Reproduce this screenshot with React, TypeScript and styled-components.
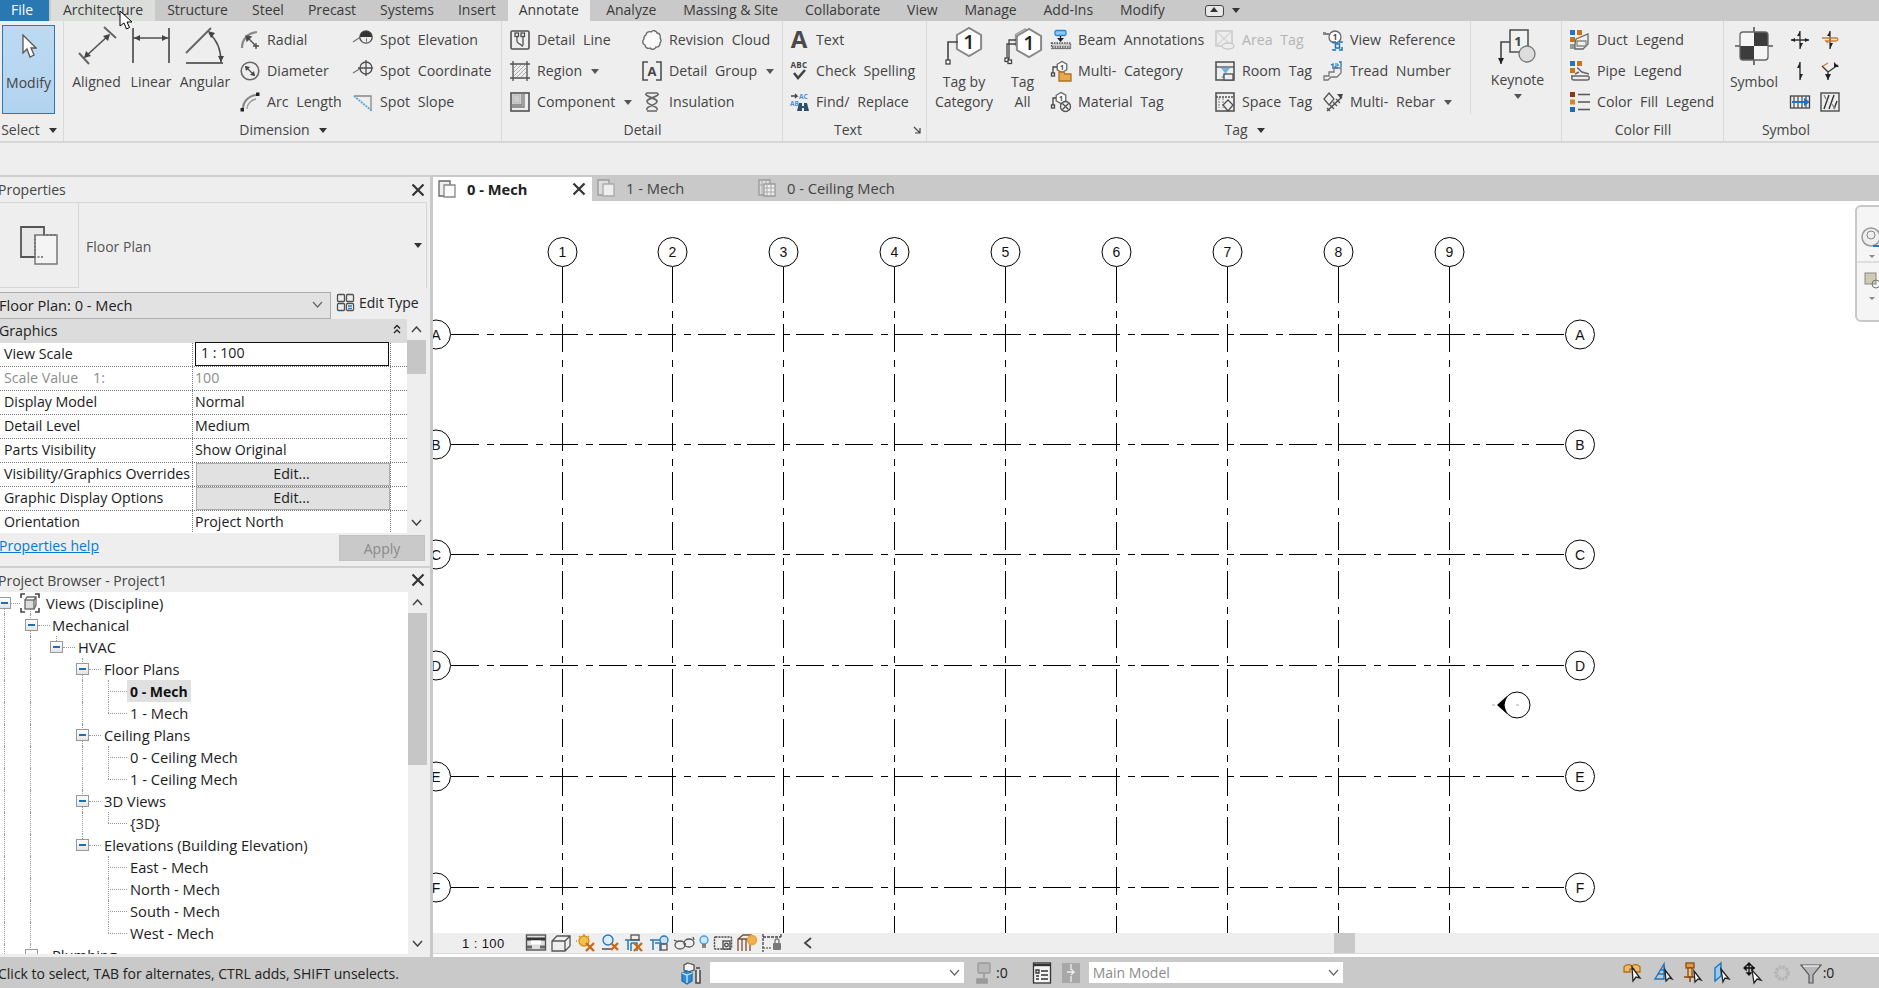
import React from 'react';
import styled, { createGlobalStyle } from 'styled-components';

const Global = createGlobalStyle`
  html, body { margin: 0; padding: 0; background: #eee; overflow: hidden; }
  #root { width: 1879px; height: 988px; }
`;

const FONT = `"Open Sans", "Noto Sans", "Liberation Sans", sans-serif`;
const INK = '#3f3f3f';

const Page = styled.div`
  position: relative; width: 1879px; height: 988px; overflow: hidden;
  display: flex; flex-direction: column;
  background: #eee; font-family: ${FONT}; font-size: 14px; color: ${INK};
`;

/* ---------- icon helpers ---------- */
const Glyph = styled.svg`
  display: block; flex-shrink: 0; fill: none; stroke: #505050; stroke-width: 1.3; overflow: visible;
  text { font-family: ${FONT}; stroke: none; fill: #444; }
`;
const ic = (w: number, h: number, children: React.ReactNode) => (
  <Glyph width={w} height={h} viewBox={`0 0 ${w} ${h}`}>{children}</Glyph>
);
const hex = (cx: number, cy: number, r: number) => {
  const p = [];
  for (let i = 0; i < 6; i++) {
    const a = Math.PI / 3 * i + Math.PI / 6;
    p.push(`${(cx + r * Math.cos(a)).toFixed(1)},${(cy + r * Math.sin(a)).toFixed(1)}`);
  }
  return p.join(' ');
};

const I = {
  aligned: ic(38, 38, <>
    <path d="M26 0 38 11M1 26l10 11" strokeWidth="2" stroke="#666" />
    <path d="M31 8 7 30" strokeWidth="1.6" />
    <path d="M32 7l-7 2 5 5zM6 31l7-2-5-5z" fill="#444" stroke="none" />
  </>),
  linear: ic(38, 38, <>
    <path d="M1 1v35M37 1v35" strokeWidth="2" stroke="#666" />
    <path d="M1 11h36" strokeWidth="1.5" />
    <path d="M2 11l6-3v6zM36 11l-6-3v6z" fill="#444" stroke="none" />
  </>),
  angular: ic(38, 38, <>
    <path d="M0 26 25 1M0 36h37" strokeWidth="2" stroke="#666" />
    <path d="M23 6c8 7 12 17 12 29" strokeWidth="1.6" />
    <path d="M22 4l7 2-4 5zM35 35l-3-6h6z" fill="#444" stroke="none" />
  </>),
  radial: ic(20, 20, <>
    <path d="M2 18C2 9 8 3 17 2" strokeWidth="2.2" stroke="#888" />
    <path d="M7 7l10 10" /><path d="M6 6l5 1-4 4zM16 13v6M13 16h6" fill="#444" />
  </>),
  diameter: ic(20, 20, <>
    <circle cx="10" cy="10" r="8.8" strokeWidth="1.6" stroke="#666" />
    <path d="M5.5 5.5l9 9" /><path d="M5 5l5 1-4 4zM15 15l-5-1 4-4z" fill="#444" stroke="none" />
  </>),
  arc: ic(20, 20, <>
    <path d="M3 17C3 10 8 4 16 3" strokeWidth="2.2" stroke="#888" />
    <path d="M7 17C7 12 11 8 16 7" stroke="#999" />
    <rect x="0.5" y="16" width="3.5" height="3.5" fill="#222" stroke="none" />
    <rect x="16" y="0.5" width="3.5" height="3.5" fill="#222" stroke="none" />
  </>),
  spotE: ic(20, 20, <>
    <path d="M0 12l9-6" stroke="#777" />
    <circle cx="13" cy="7" r="6.2" fill="#eee" />
    <path d="M7 7a6 6 0 0 1 12 0zM13 7v6a6 6 0 0 0 0-6" fill="#333" stroke="none" />
  </>),
  spotC: ic(20, 20, <>
    <path d="M0 12l8-5" stroke="#777" />
    <circle cx="13" cy="7" r="6" /><path d="M13-1v16M5 7h15" />
  </>),
  spotS: ic(20, 20, <>
    <path d="M1 4h17v14" stroke="#888" />
    <path d="M1 4l18 15" stroke="#5ba4d8" strokeWidth="1.8" strokeDasharray="2 1" />
  </>),
  detailLine: ic(20, 20, <>
    <rect x="1" y="1" width="18" height="18" rx="1.5" strokeWidth="1.6" />
    <path d="M7 6v5c0 3 3 2 4 4 1 1 1 1 2 1" stroke="#555" />
    <rect x="5" y="3" width="3.5" height="3.5" /><rect x="11" y="3" width="3.5" height="3.5" /><path d="M13 6.5v9" />
  </>),
  region: ic(20, 20, <>
    <path d="M3 0v20M17 0v20M0 3h20M0 17h20" />
    <path d="M4 7l3-3M4 11l7-7M4 15l11-11M7 16l9-9M11 16l5-5" stroke="#aaa" strokeWidth="1" />
  </>),
  component: ic(20, 20, <>
    <rect x="1" y="1" width="18" height="18" strokeWidth="1.6" />
    <path d="M3 3l7 0v8H3z" fill="#ccc" stroke="#bbb" />
    <path d="M1 13h11V1M1 15h13V1" stroke="#777" />
  </>),
  cloud: ic(20, 20, <path d="M4 5a3.5 3.5 0 0 1 5-3 3.5 3.5 0 0 1 6 1 3.5 3.5 0 0 1 3 5 3.5 3.5 0 0 1 0 5 3.5 3.5 0 0 1-4 4 3.5 3.5 0 0 1-6 1 3.5 3.5 0 0 1-5-3 3.5 3.5 0 0 1-1-6 3.5 3.5 0 0 1 2-4z" stroke="#666" strokeWidth="1.3" fill="#fafafa" />),
  detailGroup: ic(20, 20, <>
    <path d="M6 1H1v18h5M14 1h5v18h-5" strokeWidth="1.6" />
    <text x="10" y="15" fontSize="13" fontWeight="700" textAnchor="middle">A</text>
  </>),
  insulation: ic(20, 20, <path d="M5 1c-5 3 9 5 10 8 1 4-12 5-10 9M15 1c5 3-9 5-10 8-1 4 12 5 10 9M5 1h10M5 19h10" strokeWidth="1.7" stroke="#666" />),
  bigA: ic(20, 20, <text x="10" y="18" fontSize="24" fontWeight="700" textAnchor="middle" style={{ fill: '#4a4a4a' }}>A</text>),
  spell: ic(20, 20, <>
    <text x="10" y="7" fontSize="8" fontWeight="700" textAnchor="middle" letterSpacing="0.4">ABC</text>
    <path d="M5 12l4 5 7-8" strokeWidth="2.6" stroke="#444" />
  </>),
  find: ic(20, 20, <>
    <path d="M2 4h6l-2-2M8 4l-2 2" stroke="#444" />
    <text x="10" y="7" fontSize="6.5" fontWeight="700" style={{ fill: '#4a90d0' }}>AC</text>
    <text x="1" y="14" fontSize="6.5" fontWeight="700" style={{ fill: '#4a90d0' }}>AB</text>
    <path d="M10 11h3v3h2v-3h3l2 8h-5v-3h-2v3H8z" fill="#2d4f6b" stroke="none" />
  </>),
  tagCat: ic(38, 38, <>
    <polygon points={hex(24, 15, 14)} fill="#fff" strokeWidth="2" stroke="#888" />
    <path d="M13 15H3v21" strokeWidth="1.6" stroke="#444" />
    <rect x="1" y="33" width="4" height="4" fill="#fff" stroke="#444" />
    <text x="24" y="22" fontSize="20" fontWeight="600" textAnchor="middle" style={{ fill: '#222' }}>1</text>
  </>),
  tagAll: ic(38, 38, <>
    <polygon points={hex(21, 13, 11)} fill="#fff" stroke="#999" />
    <polygon points={hex(25, 16, 14)} fill="#fff" strokeWidth="2" stroke="#888" />
    <path d="M12 13H5v19M12 17H3v14" strokeWidth="1.3" stroke="#444" />
    <rect x="1" y="31" width="3.5" height="3.5" fill="#fff" stroke="#444" /><rect x="4" y="33" width="3.5" height="3.5" fill="#fff" stroke="#444" />
    <text x="25" y="23" fontSize="20" fontWeight="600" textAnchor="middle" style={{ fill: '#222' }}>1</text>
  </>),
  beam: ic(20, 20, <>
    <rect x="4" y="0.5" width="11" height="5" rx="1.5" fill="#8cc8f5" stroke="#2a86d0" />
    <path d="M9.5 6v4" stroke="#222" /><path d="M6 8l3.5 4L13 8z" fill="#222" stroke="none" />
    <rect x="0.5" y="13" width="19" height="4" fill="#ccc" stroke="#555" strokeDasharray="1.5 1" />
    <path d="M0 18.5h20" stroke="#777" />
  </>),
  multiCat: ic(20, 20, <>
    <polygon points={hex(11, 6, 5.5)} fill="#fff" stroke="#666" />
    <path d="M6 6H2v7" stroke="#444" /><rect x="0.5" y="12" width="3" height="3" fill="#fff" stroke="#444" />
    <text x="11" y="9" fontSize="7" fontWeight="700" textAnchor="middle">1</text>
    <path d="M8 11h5l1 2h6v7H8z" fill="#e9a951" stroke="#b0701f" />
  </>),
  matTag: ic(20, 20, <>
    <polygon points={hex(10, 6, 5.5)} fill="#fff" stroke="#666" />
    <path d="M5 6H2v8" stroke="#444" /><rect x="0.5" y="13" width="3" height="3" fill="#fff" stroke="#444" />
    <text x="10" y="9" fontSize="7" fontWeight="700" textAnchor="middle">1</text>
    <circle cx="14.5" cy="14.5" r="5" fill="#eee" /><path d="M11.5 11.5l6 6M17.5 11.5l-6 6" />
  </>),
  areaTag: ic(20, 20, <>
    <rect x="1" y="1" width="16" height="15" stroke="#c8c8c8" strokeWidth="1.5" />
    <path d="M1 1l16 15M17 1L1 16" stroke="#d4d4d4" />
    <ellipse cx="13" cy="16" rx="6" ry="3" fill="#eee" stroke="#c8c8c8" />
  </>),
  roomTag: ic(20, 20, <>
    <rect x="1" y="1" width="18" height="18" strokeWidth="1.6" stroke="#555" />
    <path d="M1 6h18" /><path d="M6 7h9l-4 5 4 5H6l4-5z" fill="#6fb1e2" stroke="none" />
    <rect x="9" y="13" width="9" height="6" fill="#eee" />
  </>),
  spaceTag: ic(20, 20, <>
    <rect x="1" y="1" width="18" height="18" strokeWidth="1.6" stroke="#555" />
    <path d="M1 5h18" strokeDasharray="2 1" /><path d="M4 6v10M8 6v10" stroke="#999" strokeDasharray="2 1" />
    <path d="M13 8l5 5-5 6-5-6z" fill="#eee" />
  </>),
  viewRef: ic(20, 20, <>
    <circle cx="12" cy="7" r="6" fill="#fff" stroke="#666" />
    <path d="M0 4h6" stroke="#444" /><rect x="0" y="2" width="3" height="3" fill="#888" stroke="none" />
    <text x="12" y="10" fontSize="8" fontWeight="700" textAnchor="middle">1</text>
    <path d="M10 13v-1h3M16 12h3v1M19 17v3h-3M13 20h-3v-1" stroke="#1b75c4" strokeWidth="1.5" />
    <rect x="12.5" y="14" width="4" height="4" stroke="#1b75c4" strokeWidth="1.5" />
  </>),
  tread: ic(20, 20, <>
    <path d="M1 19v-4h5v-4h5V7h7v5l-4 4H8l-3 3z" fill="#eee" stroke="#777" />
    <path d="M8 4l2-1v5M16 1h2v5" stroke="#1b75c4" /><path d="M12 3h3v2h-3v2h3" stroke="#1b75c4" strokeWidth="1" />
  </>),
  rebar: ic(20, 20, <>
    <path d="M6 1l5 6-5 6-5-6z" fill="#eee" stroke="#555" />
    <path d="M4 19L19 5" stroke="#555" strokeWidth="1.6" />
    <path d="M7 13l4 4M10 10l4 4M13 7l4 4M4 16l3 3" stroke="#555" />
    <path d="M14 2l6 0-2 5z" fill="#444" stroke="none" />
  </>),
  keynote: ic(38, 36, <>
    <path d="M11 13H2v22" strokeWidth="1.6" stroke="#444" />
    <path d="M-1 29h6l-3 6z" fill="#222" stroke="none" />
    <rect x="11" y="1" width="18" height="22" fill="#f2f2f2" strokeWidth="1.6" stroke="#555" />
    <text x="19" y="17" fontSize="13" fontWeight="700" textAnchor="middle">1</text>
    <circle cx="28" cy="25" r="8" fill="#ddd" stroke="#777" />
  </>),
  duct: ic(20, 20, <>
    <rect x="0" y="0" width="5" height="5" fill="#2b73b8" stroke="none" /><rect x="7" y="0" width="5" height="5" fill="#c8741a" stroke="none" />
    <rect x="0" y="7" width="5" height="5" fill="#c8741a" stroke="none" /><rect x="0" y="14" width="5" height="5" fill="#999" stroke="none" />
    <path d="M6 9l12-5v10l-5 5H5v-5z" fill="#eee" stroke="#666" /><path d="M7 11h9v5H7z" stroke="#888" />
  </>),
  pipe: ic(20, 20, <>
    <rect x="0" y="0" width="5" height="5" fill="#2b73b8" stroke="none" /><rect x="7" y="0" width="5" height="5" fill="#c8741a" stroke="none" />
    <rect x="0" y="7" width="5" height="5" fill="#c8741a" stroke="none" />
    <path d="M7 7c2 0 3 3 5 4l7 2M5 13l4-2M1 15h16c3 0 3 4 0 4H4c-3 0-3-4 0-4" stroke="#666" strokeWidth="1.4" />
  </>),
  legend: ic(20, 20, <>
    <rect x="0" y="0" width="5" height="5" fill="#8c3a10" stroke="none" /><rect x="0" y="7.5" width="5" height="5" fill="#d08a2a" stroke="none" />
    <rect x="0" y="15" width="5" height="5" fill="#1f6bb5" stroke="none" />
    <path d="M8 2.5h12M8 10h12M8 17.5h12" strokeWidth="1.7" stroke="#555" />
  </>),
  symbol: ic(38, 38, <>
    <path d="M19 0v38M0 19h38" strokeWidth="1.6" stroke="#555" />
    <rect x="5" y="5" width="14" height="14" fill="#f6f6f6" stroke="none" /><rect x="19" y="19" width="14" height="14" fill="#f6f6f6" stroke="none" />
    <path d="M19 5h11a3 3 0 0 1 3 3v11H19zM19 33H8a3 3 0 0 1-3-3V19h14z" fill="#3c3c3c" stroke="none" />
    <rect x="5" y="5" width="28" height="28" rx="3" stroke="#666" />
  </>),
  s1: ic(20, 20, <><path d="M10 1v18M1 10h18" stroke="#333" /><path d="M10 1l-3 5h3zM10 19l3-6h-3zM1 10l4-2v4zM19 10l-4-2v4z" fill="#222" stroke="none" /></>),
  s2: ic(20, 20, <><path d="M10 1v18" stroke="#333" /><path d="M10 1l-3 5h3zM10 19l3-6h-3z" fill="#222" stroke="none" /><path d="M2 8h15c2 2 0 3-2 3H6l2 2" stroke="#d07a2c" strokeWidth="1.4" /></>),
  s3: ic(20, 20, <><path d="M10 1v18" stroke="#333" strokeWidth="1.4" /><path d="M10 1l-3 6h3zM10 19l3-6h-3z" fill="#222" stroke="none" /></>),
  s4: ic(20, 20, <><path d="M8 19V11l10-7M8 11L2 5" stroke="#333" /><path d="M8 19l-3-6h6z" fill="#222" stroke="none" /><path d="M14 1l5 5h-5z" fill="#222" stroke="none" /><path d="M3 5l5-3" stroke="#d07a2c" /></>),
  s5: ic(20, 20, <>
    <rect x="0.5" y="4" width="19" height="12" stroke="#444" /><path d="M4 4v12M8 4v12M12 4v12M16 4v12" stroke="#555" />
    <path d="M2 10h15" stroke="#1b75c4" strokeWidth="2" /><path d="M14 6l6 4-6 4z" fill="#1b75c4" stroke="none" />
  </>),
  s6: ic(20, 20, <><rect x="1" y="1" width="18" height="18" stroke="#555" strokeWidth="1.5" /><path d="M4 17L9 3M9 17l5-14M14 17l3-8" stroke="#333" strokeWidth="1.4" /><path d="M4 3l2 4M12 12l3 5" stroke="#888" /></>),
  floorBig: ic(40, 40, <>
    <path d="M2 2h23v30H2z" fill="#e8e8e8" stroke="#555" strokeWidth="1.8" />
    <path d="M16 10h22v29H16z" fill="#f4f4f4" stroke="#777" strokeWidth="1.5" />
    <path d="M25 2v8h13M16 10v22h9" stroke="#666" strokeDasharray="2 1.5" />
  </>),
  editType: ic(17, 17, <>
    <rect x="0.5" y="0.5" width="7" height="7" rx="1" /><rect x="9.5" y="0.5" width="7" height="7" rx="1" />
    <rect x="0.5" y="9.5" width="7" height="7" rx="1" /><rect x="9.5" y="9.5" width="7" height="7" rx="1" fill="#fff" />
    <path d="M11 12h4M11 14.5h4" stroke="#2a7ab5" />
  </>),
  views: ic(18, 18, <>
    <path d="M0 4V0h4M14 0h4v4M18 14v4h-4M4 18H0v-4" strokeWidth="1.6" stroke="#444" />
    <rect x="4" y="6" width="9" height="9" fill="#ddd" stroke="#666" /><path d="M4 6l2-3h9v8l-2 4M13 6l2-3" stroke="#666" />
  </>),
  tabPlan: ic(18, 18, <>
    <path d="M1 1h11v15H1z" fill="#eee" stroke="#666" /><path d="M6 5h11v12H6z" fill="#fafafa" stroke="#888" /><path d="M12 1v4" stroke="#888" strokeDasharray="1.5 1" />
  </>),
  tabPlanDim: ic(18, 18, <>
    <path d="M1 1h11v15H1z" fill="#ddd" stroke="#999" /><path d="M6 5h11v12H6z" fill="#eee" stroke="#aaa" />
  </>),
  tabCeil: ic(18, 18, <>
    <path d="M1 1h11v15H1z" fill="#ddd" stroke="#999" /><path d="M6 5h11v12H6z" fill="#eee" stroke="#999" />
    <path d="M9 5v12M13 5v12M6 9h11M6 13h11M4 1v15M8 1v4M1 6h5" stroke="#aaa" strokeWidth="1" />
  </>),
  vb1: ic(20, 18, <><rect x="0.5" y="1" width="19" height="15" fill="#ddd" stroke="#555" strokeWidth="1.4" /><path d="M1 5h18" stroke="#333" strokeWidth="3" /><rect x="5" y="6.5" width="10" height="4" fill="#fff" stroke="none" /><path d="M1 13h5M14 13h5" stroke="#666" strokeWidth="3" /></>),
  vb2: ic(20, 18, <><path d="M1 7l5-5h13v10l-5 5H1zM1 7h13v10M14 7l5-5" stroke="#555" /></>),
  vb3: ic(20, 18, <><circle cx="8" cy="7" r="5" fill="#f3c14b" stroke="#d78a1c" /><path d="M8 0v2M1 7H0M3 2l1 1M13 2l-1 1" stroke="#d78a1c" /><path d="M10 9l8 8M18 9l-8 8" stroke="#c96a1b" strokeWidth="2.4" /></>),
  vb4: ic(18, 18, <><circle cx="7" cy="6" r="5" fill="#dcecf8" stroke="#2a7ab5" strokeWidth="1.4" /><path d="M1 15h9" stroke="#777" strokeWidth="2" /><path d="M10 9l7 7M17 9l-7 7" stroke="#c96a1b" strokeWidth="2.4" /></>),
  vb5: ic(20, 18, <><path d="M1 6h3v10M4 6h12M7 9h6v8M7 9v8" stroke="#2a7ab5" strokeWidth="1.5" /><rect x="7" y="1" width="8" height="5" stroke="#555" /><path d="M10 9l8 8M18 9l-8 8" stroke="#c96a1b" strokeWidth="2.4" /></>),
  vb6: ic(20, 18, <><path d="M1 6h3v10M4 6h7M6 9h5v8" stroke="#2a7ab5" strokeWidth="1.5" /><circle cx="15" cy="6" r="4" fill="#c8e2f6" stroke="#2a7ab5" /><rect x="12" y="10" width="6" height="6" stroke="#555" /></>),
  vb7: ic(20, 18, <><ellipse cx="6" cy="11" rx="5" ry="4" stroke="#555" /><ellipse cx="15" cy="9" rx="5" ry="4" stroke="#555" /><path d="M0 6l4 2M11 10l1 0M19 3l1 3" stroke="#555" /></>),
  vb8: ic(10, 18, <><circle cx="5" cy="6" r="4" fill="#cfe6f8" stroke="#4a9fdc" strokeWidth="1.4" /><path d="M3 11h4M3 13h4" stroke="#666" /></>),
  vb9: ic(18, 18, <><rect x="0.5" y="3" width="17" height="12" rx="1" stroke="#444" strokeDasharray="2 1" strokeWidth="1.5" /><rect x="9" y="7" width="7" height="8" fill="#eee" stroke="#444" /><circle cx="12.5" cy="11" r="1.8" stroke="#444" /></>),
  vb10: ic(20, 18, <><path d="M1 17V5l5-4h8v4M1 5h12v12M5 5v12M9 5v12" stroke="#7a4f3a" /><circle cx="15" cy="6" r="4.5" fill="#f3b04b" stroke="#e7a23a" /></>),
  vb11: ic(20, 18, <><path d="M1 0v18M19 0v3M1 3h18" stroke="#444" strokeDasharray="3 1" /><path d="M1 14h8" stroke="#777" strokeDasharray="2 1" /><rect x="11" y="9" width="8" height="7" rx="1" fill="#777" stroke="none" /><path d="M13 9V7a2 2 0 0 1 4 0v2" stroke="#777" /></>),
  worksets: ic(20, 22, <>
    <path d="M6 1l6 2v5l-6 2-4-2V3z" fill="#f4f4f4" stroke="#555" />
    <path d="M0 11l5-2 5 2v8l-5 3-5-3z" fill="#2f8ad4" stroke="#1b6fae" /><path d="M5 13v8M0 11l5 2 5-2" stroke="#cfe6f8" />
    <path d="M14 8v13h4V8M14 6h4" stroke="#444" strokeWidth="1.5" fill="#e6e6e6" />
  </>),
  design: ic(18, 22, <>
    <rect x="5" y="1" width="12" height="10" rx="1" fill="#b8b8b8" stroke="#999" />
    <path d="M11 11v5M4 21v-4h10v4z" fill="#9a9a9a" stroke="#999" strokeWidth="1.6" />
  </>),
  list: ic(18, 22, <>
    <rect x="0.5" y="1" width="17" height="20" fill="#f3f3f3" stroke="#333" />
    <path d="M1 3h16" stroke="#333" strokeWidth="2.4" />
    <path d="M3 8h3v3H3zM3 14h3M8 9h7M8 13h7M3 17h3M8 17h7" stroke="#333" />
  </>),
  door: ic(18, 22, <><path d="M0 1h18v20H0z" fill="#a8a8a8" stroke="none" /><path d="M5 10h7l-3-3M12 10l-3 3M9 2v6M9 14v6" stroke="#eee" /></>),
  st1: ic(20, 22, <><path d="M1 5c2-3 6-3 8-1 2-2 6-2 8 1v5h-6V7H7v3H1z" fill="#eebb66" stroke="#b06d1a" /><path d="M9 5l1 14 3-4 4 1z" fill="#fff" stroke="#222" /></>),
  st2: ic(20, 22, <><path d="M2 17L11 2v15H2zM11 2l2 15M5 12h6M7 8h4" stroke="#1b75c4" strokeWidth="1.4" /><path d="M12 8l1 11 3-3 3 1z" fill="#fff" stroke="#222" /></>),
  st3: ic(20, 22, <><rect x="3" y="1" width="8" height="5" fill="#e59a3f" stroke="#8c4a10" /><rect x="5" y="6" width="4" height="9" fill="#f2c27a" stroke="#8c4a10" /><path d="M1 15h12M7 15v5" stroke="#8c4a10" strokeWidth="1.5" /><path d="M11 9l1 11 3-3 3 1z" fill="#fff" stroke="#222" /></>),
  st4: ic(20, 22, <><path d="M2 6l6-5v13l-6 5z" fill="#9ec9ef" stroke="#1b75c4" strokeWidth="1.4" /><path d="M8 7l2 13 2-4 4 1z" fill="#fff" stroke="#222" /></>),
  st5: ic(20, 22, <><path d="M6 1v12M1 6h11M6 1L4 3h4zM6 13l-2-2h4zM1 6l2-2v4zM11 6L9 4v4z" stroke="#111" /><path d="M9 8l2 13 3-4 4 1z" fill="#fff" stroke="#222" /></>),
  st6: ic(18, 22, <circle cx="9" cy="11" r="6" stroke="#b4b4b4" strokeWidth="3.6" strokeDasharray="2.5 1" />),
  funnel: ic(20, 22, <><path d="M0 3h20L12 13v8H8v-8z" fill="#b8b8b8" stroke="#555" strokeWidth="1.2" /><path d="M2 4h16" stroke="#eee" /></>),
  leftChevron: ic(10, 12, <path d="M8 1L2 6l6 5" strokeWidth="1.8" stroke="#444" />),
};

/* ---------- tabs ---------- */
const TabBar = styled.div`display: flex; height: 21px; background: #c9c9c9; flex-shrink: 0;`;
const FileTab = styled.div`
  width: 49px; margin-right: 2px; box-sizing: border-box; padding-right: 5px; background: #2878b2; color: #fff; text-align: center; line-height: 20px;
`;
const Tab = styled.div<{ $kind?: string; $wide?: boolean; $ml?: number }>`
  padding: 0 ${p => (p.$kind === 'active' ? 11 : p.$wide ? 13.4 : 12)}px; line-height: 20px; color: #3a3a3a;
  ${p => (p.$ml ? `margin-left: ${p.$ml}px;` : '')}
  background: ${p => (p.$kind === 'active' ? '#eeeeee' : p.$kind === 'hover' ? '#dcdedc' : 'transparent')};
`;
const TabExtra = styled.div`
  margin-left: 27px; display: flex; align-items: center; gap: 8px;
`;
const CollapseBtn = styled.div`
  width: 17px; height: 10px; border: 1.5px solid #444; border-radius: 3px; background: #e8e8e8; position: relative;
  &::after { content: ''; position: absolute; left: 4px; top: 1px; border: 4px solid transparent; border-top: 0; border-bottom: 5px solid #333; }
`;
const Caret = styled.span<{ $dark?: boolean; $ml?: number }>`
  display: inline-block; width: 0; height: 0; border-left: 4px solid transparent; border-right: 4px solid transparent;
  border-top: 5px solid ${p => (p.$dark ? '#333' : '#555')};
  margin-left: ${p => p.$ml ?? 0}px; vertical-align: 2px;
`;

/* ---------- ribbon ---------- */
const Ribbon = styled.div`
  display: flex; height: 120px; flex-shrink: 0; border-bottom: 2px solid #d6d6d6; background: #eee;
`;
const Panel = styled.div<{ $w: number; $flat?: boolean }>`
  width: ${p => p.$w}px; flex-shrink: 0; display: flex; flex-direction: column; position: relative;
  ${p => (p.$flat ? '' : 'box-shadow: inset -1px 0 0 #d9d9d9;')}
`;
const PanelBody = styled.div<{ $pl?: number }>`
  height: 98px; display: flex; padding-left: ${p => p.$pl ?? 0}px;
`;
const Caption = styled.div<{ $pr?: number }>`
  height: 22px; line-height: 22px; display: flex; justify-content: center; align-items: center; gap: 9px;
  color: #444; padding-right: ${p => p.$pr ?? 0}px;
`;
const CornerArrow = styled.svg`
  position: absolute; right: 6px; bottom: 7px; width: 8px; height: 8px; fill: none; stroke: #444; stroke-width: 1.2;
`;
const LargeTool = styled.div<{ $w: number }>`
  width: ${p => p.$w}px; flex-shrink: 0; display: flex; flex-direction: column; align-items: center; padding-top: 6px;
`;
const LargeLabel = styled.div`
  margin-top: 7px; line-height: 20px; text-align: center; white-space: pre-line; color: #444;
`;
const ToolColumn = styled.div<{ $w: number; $ml?: number }>`
  width: ${p => p.$w}px; margin-left: ${p => p.$ml ?? 0}px; flex-shrink: 0; padding-top: 3px; display: flex; flex-direction: column;
`;
const SmallTool = styled.div<{ $off?: boolean }>`
  height: 31px; display: flex; align-items: center; gap: 7px; white-space: nowrap; word-spacing: 4px; font-size: 14.2px;
  color: ${p => (p.$off ? '#b4b4b4' : '#444')};
`;
const ModifyButton = styled.div`
  width: 53px; height: 89px; margin: 4px 0 0 2px; box-sizing: border-box; display: flex; flex-direction: column; align-items: center;
  background: linear-gradient(#bddaf2, #b2d3ef); border: 1.5px solid #2a78b5; color: #444; padding-top: 8px;
`;
const CursorGlyph = styled.svg`display: block; margin-bottom: 15px; flex-shrink: 0;`;
const KeynoteGroup = styled.div`
  width: 91px; height: 93px; box-sizing: border-box; border-left: 1px solid #d9d9d9; padding-left: 3px; display: flex; flex-direction: column; align-items: center;
  padding-top: 8px; gap: 5px;
`;
const KeynoteLabel = styled.div`line-height: 20px; color: #444; margin-bottom: -1px;`;
const SymbolGrid = styled.div`
  display: grid; grid-template-columns: repeat(2, 30px); grid-auto-rows: 31px; padding-top: 3px; margin-left: 6px; align-items: center;
`;
const OptionsBar = styled.div`height: 32px; flex-shrink: 0; background: #eee;`;

/* ---------- workspace ---------- */
const Workspace = styled.div`display: flex; flex: 1; min-height: 0;`;
const LeftDock = styled.div`
  width: 430px; flex-shrink: 0; display: flex; flex-direction: column; background: #eee; overflow: hidden;
  border-top: 2px solid #cfcfcf; border-right: 3px solid #c9c9c9; box-sizing: content-box; height: 780px;
`;
const DockHeader = styled.div<{ $h: number }>`
  height: ${p => p.$h}px; flex-shrink: 0; display: flex; align-items: center; justify-content: space-between;
  padding-right: 5px; color: #444;
`;
const DockTitle = styled.span`margin-left: -2px;`;
const CloseX = styled.svg`
  width: 14px; height: 14px; stroke: #333; stroke-width: 2.2; fill: none; flex-shrink: 0; display: block;
`;
const TypeBox = styled.div`
  height: 86px; box-sizing: border-box; width: 427px; flex-shrink: 0; display: flex; align-items: center;
  border-top: 1px solid #d6d6d6; border-right: 1px solid #d6d6d6; position: relative;
`;
const TypeThumb = styled.div`
  width: 79px; height: 85px; box-sizing: border-box; border-right: 1px solid #d6d6d6; border-bottom: 1px solid #d6d6d6;
  display: flex; align-items: center; justify-content: center;
`;
const TypeName = styled.span`margin-left: 7px; margin-top: 1px; color: #555; flex: 1;`;
const TypeCaret = styled.span`margin-right: 4px; line-height: 0;`;
const SelectorRow = styled.div`
  height: 31px; flex-shrink: 0; display: flex; align-items: center; padding-top: 2px; box-sizing: border-box;
`;
const ViewCombo = styled.div`
  width: 331px; height: 27px; box-sizing: border-box; background: #e2e2e2; border: 1px solid #adadad; border-left: 0;
  display: flex; align-items: center; justify-content: space-between; padding: 0 7px 2px 0; color: #222; margin-top: 2px; font-size: 14.6px;
`;
const ComboText = styled.span`margin-left: -1px;`;
const EditType = styled.div`
  display: flex; align-items: center; gap: 5px; margin-left: 6px; color: #222; margin-top: -4px;
`;
const Chevron = styled.svg<{ $c?: string }>`
  width: 11px; height: 7px; fill: none; stroke: ${p => p.$c ?? '#666'}; stroke-width: 1.2; flex-shrink: 0; display: block;
`;
const PropsArea = styled.div`height: 214px; flex-shrink: 0; display: flex;`;
const PropsMain = styled.div`width: 407px; flex-shrink: 0; background: #fff; overflow: hidden; font-size: 14.2px;`;
const CategoryRow = styled.div`
  height: 24px; box-sizing: border-box; padding: 0 6px 2px 0; background: #dcdcdc; display: flex; align-items: center; justify-content: space-between;
  color: #222; font-weight: 400;
`;
const CategoryText = styled.span`margin-left: -1px;`;
const CollapseGlyph = styled.svg`width: 8px; height: 10px; fill: none; stroke: #222; stroke-width: 1.4; margin-top: -3px;`;
const PropRow = styled.div`
  height: 24px; box-sizing: border-box; display: grid; grid-template-columns: 193px 198px 16px;
  border-bottom: 1px dotted #777; color: #1b1b1b;
`;
const PropLabel = styled.div<{ $dim?: boolean }>`
  padding-left: 4px; line-height: 21px; white-space: pre; color: ${p => (p.$dim ? '#8d8d8d' : '#1b1b1b')};
  border-right: 1px dotted #777; overflow: hidden;
`;
const PropValue = styled.div<{ $dim?: boolean }>`
  padding-left: 2px; line-height: 21px; color: ${p => (p.$dim ? '#8d8d8d' : '#1b1b1b')}; border-right: 1px dotted #777;
`;
const ScaleInput = styled.div`
  height: 24px; box-sizing: border-box; border: 1.5px solid #111; background: #fff; margin-top: -1px; line-height: 20px; padding-left: 5px; margin-right: 1px;
`;
const PropButton = styled.div`
  height: 23px; box-sizing: border-box; background: #e1e1e1; border: 1.5px solid #adadad; text-align: center; line-height: 19px; padding-right: 3px; margin: 0 0 0 1px;
`;
const VScroll = styled.div<{ $w?: number }>`
  width: ${p => p.$w ?? 19}px; flex-shrink: 0; background: #eee; display: flex; flex-direction: column; align-items: center;
`;
const ScrollEnd = styled.div`height: 21px; flex-shrink: 0; display: flex; align-items: center; justify-content: center; width: 100%;`;
const ScrollThumb = styled.div<{ $h: number }>`height: ${p => p.$h}px; width: 100%; background: #c6c6c6; flex-shrink: 0;`;
const ScrollRest = styled.div`flex: 1;`;
const PropsFooter = styled.div`
  height: 33px; flex-shrink: 0; display: flex; justify-content: space-between; padding-right: 5px;
`;
const HelpLink = styled.a`
  color: #0a78d2; text-decoration: underline; margin-left: -1px; line-height: 26px;
`;
const ApplyButton = styled.div`
  width: 86px; height: 26px; margin-top: 2px; background: #c9c9c9; color: #8a8a8a; border: 1px solid #c2c2c2; box-sizing: border-box;
  text-align: center; line-height: 26px;
`;
const DockDivider = styled.div`height: 2px; flex-shrink: 0; background: #cfcfcf;`;
const TreeArea = styled.div`height: 362px; flex-shrink: 0; display: flex;`;
const TreeMain = styled.div`width: 408px; flex-shrink: 0; background: #fff; overflow: hidden; color: #1c1c1c; font-size: 14.7px;`;
const TreeRow = styled.div`position: relative; height: 22px;`;
const TreeText = styled.span<{ $x: number; $sel?: boolean }>`
  position: absolute; left: ${p => p.$x}px; top: 0; line-height: 23px; white-space: nowrap;
  ${p => (p.$sel ? 'font-weight: 700; background: #e0e0e0; padding: 0 3px; margin-left: -3px; color: #111; font-size: 14px; height: 22px;' : '')}
`;
const Guide = styled.i<{ $x: number; $part: string }>`
  position: absolute; left: ${p => p.$x}px; width: 0; border-left: 1px dotted #999;
  top: ${p => (p.$part === 'b' ? '11px' : '0')}; height: ${p => (p.$part === 'f' ? '22px' : '11px')};
`;
const Connector = styled.i<{ $x: number; $w: number }>`
  position: absolute; left: ${p => p.$x}px; top: 11px; width: ${p => p.$w}px; height: 0; border-top: 1px dotted #999;
`;
const ExpandBox = styled.i<{ $x: number }>`
  position: absolute; left: ${p => p.$x}px; top: 5px; width: 13px; height: 12px; box-sizing: border-box;
  border: 1px solid #999; background: linear-gradient(#fff, #e4e4e4);
  &::after { content: ''; position: absolute; left: 2px; right: 2px; top: 4px; height: 1.5px; background: #1f6fb5; }
`;
const TreeIcon = styled.span<{ $x: number }>`position: absolute; left: ${p => p.$x}px; top: 2px;`;

/* canvas */
const CanvasColumn = styled.div`flex: 1; min-width: 0; display: flex; flex-direction: column;`;
const ViewTabs = styled.div`
  height: 26px; flex-shrink: 0; display: flex; background: #c9c9c9; font-size: 14.7px;
`;
const ViewTab = styled.div<{ $w: number; $active?: boolean }>`
  width: ${p => p.$w}px; flex-shrink: 0; box-sizing: border-box; display: flex; align-items: center; padding-left: 5px; gap: 11px;
  ${p => (p.$active
    ? 'background: #fff; margin-top: 2px; color: #222; font-weight: 700; justify-content: flex-start;'
    : 'color: #444;')}
`;
const TabGrow = styled.span`flex: 1;`;
const TabClose = styled.span`margin-right: 6px; line-height: 0;`;
const Drawing = styled.div`position: relative; flex: 1; min-height: 0; background: #fff;`;
const Plan = styled.svg`
  display: block; width: 100%; height: 100%;
  text { font-family: "Liberation Sans", Arial, sans-serif; font-size: 14px; fill: #111; text-anchor: middle; dominant-baseline: central; }
`;
const NavBar = styled.div`
  position: absolute; right: -6px; top: 4px; width: 30px; height: 117px; box-sizing: border-box;
  border: 2px solid #c8c8c8; border-radius: 6px; background: #f5f5f5; overflow: hidden;
`;
const ViewBar = styled.div`
  height: 20px; flex-shrink: 0; background: #eeeeee; display: flex; align-items: center; position: relative; margin-left: 1px;
`;
const ScaleText = styled.span`
  margin-left: 28px; width: 64px; font-family: "Liberation Sans", Arial, sans-serif; font-size: 13px; letter-spacing: 0.4px; color: #1a1020;
`;
const BarIcons = styled.div`display: flex; align-items: center; gap: 5px;`;
const BarChevron = styled.span`margin-left: 21px;`;
const HThumb = styled.div`position: absolute; left: 900px; top: 0; width: 21px; height: 20px; background: #c9c9c9;`;
const BarGap = styled.div`height: 4px; flex-shrink: 0; background: #fff; border-top: 1px solid #d9d9d9; box-sizing: border-box;`;

/* status */
const StatusBar = styled.div`
  height: 31px; flex-shrink: 0; background: #c9c9c9; display: flex; align-items: center; color: #222; position: relative;
`;
const StatusText = styled.span`margin-left: -2px; margin-top: 1px; width: 684px; white-space: nowrap; flex-shrink: 0;`;
const StatusCombo = styled.div<{ $w: number; $ml: number }>`
  width: ${p => p.$w}px; margin-left: ${p => p.$ml}px; height: 21px; background: #fff; display: flex; align-items: center;
  justify-content: space-between; padding: 0 4px; box-sizing: border-box; color: #8c8c8c; flex-shrink: 0;
`;
const StatusGroup = styled.div<{ $ml: number; $gap?: number }>`
  margin-left: ${p => p.$ml}px; display: flex; align-items: center; gap: ${p => p.$gap ?? 0}px; flex-shrink: 0;
`;
const StatusCount = styled.span<{ $ml?: number }>`margin-left: ${p => p.$ml ?? 5}px; font-size: 14px;`;

const Pointer = styled.svg`position: absolute; left: 119px; top: 10px; width: 13px; height: 20px; pointer-events: none;`;

/* ---------- data ---------- */
const tabs1 = ['Structure', 'Steel', 'Precast', 'Systems', 'Insert'];
const tabs2 = ['Massing & Site', 'Collaborate', 'View', 'Manage', 'Add-Ins', 'Modify'];

type Row = { label: string; value?: string; kind?: string; dim?: boolean };
const props: Row[] = [
  { label: 'View Scale', value: '1 : 100', kind: 'input' },
  { label: 'Scale Value    1:', value: '100', dim: true },
  { label: 'Display Model', value: 'Normal' },
  { label: 'Detail Level', value: 'Medium' },
  { label: 'Parts Visibility', value: 'Show Original' },
  { label: 'Visibility/Graphics Overrides', value: 'Edit...', kind: 'btn' },
  { label: 'Graphic Display Options', value: 'Edit...', kind: 'btn' },
  { label: 'Orientation', value: 'Project North' },
];

type Part = [number, string];
type T = { label: string; x: number; box?: number; conn?: [number, number]; g: Part[]; sel?: boolean };
const base: Part[] = [[4, 'f'], [30, 'f']];
const mid: Part[] = [...base, [82, 'f']];
const tree: T[] = [
  { label: 'Views (Discipline)', x: 46, box: -2, conn: [11, 9], g: [[4, 'b'], [30, 'b']] },
  { label: 'Mechanical', x: 52, box: 25, conn: [38, 12], g: base },
  { label: 'HVAC', x: 78, box: 50, conn: [63, 12], g: [...base, [56, 't']] },
  { label: 'Floor Plans', x: 104, box: 76, conn: [89, 12], g: mid },
  { label: '0 - Mech', x: 130, conn: [108, 19], g: [...mid, [108, 'f']], sel: true },
  { label: '1 - Mech', x: 130, conn: [108, 19], g: [...mid, [108, 't']] },
  { label: 'Ceiling Plans', x: 104, box: 76, conn: [89, 12], g: mid },
  { label: '0 - Ceiling Mech', x: 130, conn: [108, 19], g: [...mid, [108, 'f']] },
  { label: '1 - Ceiling Mech', x: 130, conn: [108, 19], g: [...mid, [108, 't']] },
  { label: '3D Views', x: 104, box: 76, conn: [89, 12], g: mid },
  { label: '{3D}', x: 130, conn: [108, 19], g: [...mid, [108, 't']] },
  { label: 'Elevations (Building Elevation)', x: 104, box: 76, conn: [89, 12], g: [...base, [82, 't']] },
  { label: 'East - Mech', x: 130, conn: [108, 19], g: [...base, [108, 'f']] },
  { label: 'North - Mech', x: 130, conn: [108, 19], g: [...base, [108, 'f']] },
  { label: 'South - Mech', x: 130, conn: [108, 19], g: [...base, [108, 'f']] },
  { label: 'West - Mech', x: 130, conn: [108, 19], g: [...base, [108, 't']] },
  { label: 'Plumbing', x: 52, box: 25, conn: [38, 12], g: base },
];

const gridX = [562.5, 672.5, 783.5, 894.5, 1005.5, 1116.5, 1227.5, 1338.5, 1449.5];
const gridY: [string, number][] = [['A', 334.5], ['B', 444.5], ['C', 554.5], ['D', 665.5], ['E', 776.5], ['F', 887.5]];

const Down = () => <Chevron viewBox="0 0 11 7"><path d="M1 1l4.5 5L10 1" /></Chevron>;
const UpArrow = () => <Chevron viewBox="0 0 11 7" $c="#444"><path d="M1 6l4.5-5L10 6" strokeWidth="1.5" /></Chevron>;
const DownArrow = () => <Chevron viewBox="0 0 11 7" $c="#444"><path d="M1 1l4.5 5L10 1" strokeWidth="1.5" /></Chevron>;
const X = () => <CloseX viewBox="0 0 14 14"><path d="M1.5 1.5l11 11M12.5 1.5l-11 11" /></CloseX>;

const Small = ({ icon, children, off }: { icon: React.ReactNode; children: React.ReactNode; off?: boolean }) => (
  <SmallTool $off={off}>{icon}<span>{children}</span></SmallTool>
);
const Large = ({ w, icon, children }: { w: number; icon: React.ReactNode; children: React.ReactNode }) => (
  <LargeTool $w={w}>{icon}<LargeLabel>{children}</LargeLabel></LargeTool>
);

export default function App() {
  return (
    <Page>
      <Global />
      <TabBar>
        <FileTab>File</FileTab>
        <Tab $kind="hover">Architecture</Tab>
        {tabs1.map(t => <Tab key={t}>{t}</Tab>)}
        <Tab $kind="active">Annotate</Tab>
        <Tab $wide $ml={3}>Analyze</Tab>
        {tabs2.map(t => <Tab key={t} $wide>{t}</Tab>)}
        <TabExtra><CollapseBtn /><Caret $dark /></TabExtra>
      </TabBar>

      <Ribbon>
        <Panel $w={64}>
          <PanelBody>
            <ModifyButton>
              <CursorGlyph width="16" height="24" viewBox="0 0 16 24">
                <path d="M2 1v18l4-4 3 8 4-2-3-7h5z" fill="#fff" stroke="#555" strokeWidth="1.3" />
              </CursorGlyph>
              Modify
            </ModifyButton>
          </PanelBody>
          <Caption $pr={6}>Select<Caret $dark /></Caption>
        </Panel>
        <Panel $w={438}>
          <PanelBody $pl={2}>
            <Large w={61} icon={I.aligned}>Aligned</Large>
            <Large w={48} icon={I.linear}>Linear</Large>
            <Large w={60} icon={I.angular}>Angular</Large>
            <ToolColumn $w={113} $ml={5}>
              <Small icon={I.radial}>Radial</Small>
              <Small icon={I.diameter}>Diameter</Small>
              <Small icon={I.arc}>Arc Length</Small>
            </ToolColumn>
            <ToolColumn $w={140}>
              <Small icon={I.spotE}>Spot Elevation</Small>
              <Small icon={I.spotC}>Spot Coordinate</Small>
              <Small icon={I.spotS}>Spot Slope</Small>
            </ToolColumn>
          </PanelBody>
          <Caption>Dimension<Caret $dark /></Caption>
        </Panel>
        <Panel $w={281}>
          <PanelBody $pl={8}>
            <ToolColumn $w={132}>
              <Small icon={I.detailLine}>Detail Line</Small>
              <Small icon={I.region}>Region<Caret $ml={9} /></Small>
              <Small icon={I.component}>Component<Caret $ml={9} /></Small>
            </ToolColumn>
            <ToolColumn $w={138}>
              <Small icon={I.cloud}>Revision Cloud</Small>
              <Small icon={I.detailGroup}>Detail Group<Caret $ml={9} /></Small>
              <Small icon={I.insulation}>Insulation</Small>
            </ToolColumn>
          </PanelBody>
          <Caption>Detail</Caption>
        </Panel>
        <Panel $w={144}>
          <PanelBody $pl={6}>
            <ToolColumn $w={134}>
              <Small icon={I.bigA}>Text</Small>
              <Small icon={I.spell}>Check Spelling</Small>
              <Small icon={I.find}>Find/ Replace</Small>
            </ToolColumn>
          </PanelBody>
          <Caption $pr={14}>Text</Caption>
          <CornerArrow viewBox="0 0 8 8"><path d="M1 1l6 6M7 2v5H2" /></CornerArrow>
        </Panel>
        <Panel $w={635}>
          <PanelBody $pl={7}>
            <Large w={60} icon={I.tagCat}>{'Tag by\nCategory'}</Large>
            <Large w={57} icon={I.tagAll}>{'Tag\nAll'}</Large>
            <ToolColumn $w={164}>
              <Small icon={I.beam}>Beam Annotations</Small>
              <Small icon={I.multiCat}>Multi- Category</Small>
              <Small icon={I.matTag}>Material Tag</Small>
            </ToolColumn>
            <ToolColumn $w={108}>
              <Small icon={I.areaTag} off>Area Tag</Small>
              <Small icon={I.roomTag}>Room Tag</Small>
              <Small icon={I.spaceTag}>Space Tag</Small>
            </ToolColumn>
            <ToolColumn $w={147}>
              <Small icon={I.viewRef}>View Reference</Small>
              <Small icon={I.tread}>Tread Number</Small>
              <Small icon={I.rebar}>Multi- Rebar<Caret $ml={9} /></Small>
            </ToolColumn>
            <KeynoteGroup>
              {I.keynote}
              <KeynoteLabel>Keynote</KeynoteLabel>
              <Caret />
            </KeynoteGroup>
          </PanelBody>
          <Caption>Tag<Caret $dark /></Caption>
        </Panel>
        <Panel $w={162}>
          <PanelBody $pl={8}>
            <ToolColumn $w={152}>
              <Small icon={I.duct}>Duct Legend</Small>
              <Small icon={I.pipe}>Pipe Legend</Small>
              <Small icon={I.legend}>Color Fill Legend</Small>
            </ToolColumn>
          </PanelBody>
          <Caption>Color Fill</Caption>
        </Panel>
        <Panel $w={124} $flat>
          <PanelBody>
            <Large w={60} icon={I.symbol}>Symbol</Large>
            <SymbolGrid>
              {I.s1}{I.s2}{I.s3}{I.s4}{I.s5}{I.s6}
            </SymbolGrid>
          </PanelBody>
          <Caption>Symbol</Caption>
        </Panel>
      </Ribbon>
      <OptionsBar />

      <Workspace>
        <LeftDock>
          <DockHeader $h={25}>
            <DockTitle>Properties</DockTitle>
            <X />
          </DockHeader>
          <TypeBox>
            <TypeThumb>{I.floorBig}</TypeThumb>
            <TypeName>Floor Plan</TypeName>
            <TypeCaret><Caret $dark /></TypeCaret>
          </TypeBox>
          <SelectorRow>
            <ViewCombo><ComboText>Floor Plan: 0 - Mech</ComboText><Down /></ViewCombo>
            <EditType>{I.editType}Edit Type</EditType>
          </SelectorRow>
          <PropsArea>
            <PropsMain>
              <CategoryRow>
                <CategoryText>Graphics</CategoryText>
                <CollapseGlyph viewBox="0 0 8 10"><path d="M1 4.5L4 1.5 7 4.5M1 9L4 6 7 9" /></CollapseGlyph>
              </CategoryRow>
              {props.map(r => (
                <PropRow key={r.label}>
                  <PropLabel $dim={r.dim}>{r.label}</PropLabel>
                  <PropValue $dim={r.dim}>
                    {r.kind === 'input' ? <ScaleInput>{r.value}</ScaleInput>
                      : r.kind === 'btn' ? <PropButton>{r.value}</PropButton> : r.value}
                  </PropValue>
                </PropRow>
              ))}
            </PropsMain>
            <VScroll>
              <ScrollEnd><UpArrow /></ScrollEnd>
              <ScrollThumb $h={34} />
              <ScrollRest />
              <ScrollEnd><DownArrow /></ScrollEnd>
            </VScroll>
          </PropsArea>
          <PropsFooter>
            <HelpLink>Properties help</HelpLink>
            <ApplyButton>Apply</ApplyButton>
          </PropsFooter>
          <DockDivider />
          <DockHeader $h={24}>
            <DockTitle>Project Browser - Project1</DockTitle>
            <X />
          </DockHeader>
          <TreeArea>
            <TreeMain>
              {tree.map((t, i) => (
                <TreeRow key={i}>
                  {t.g.map(([x, part], k) => <Guide key={k} $x={x} $part={part} />)}
                  {t.conn && <Connector $x={t.conn[0]} $w={t.conn[1]} />}
                  {t.box !== undefined && <ExpandBox $x={t.box} />}
                  {i === 0 && <TreeIcon $x={21}>{I.views}</TreeIcon>}
                  <TreeText $x={t.x} $sel={t.sel}>{t.label}</TreeText>
                </TreeRow>
              ))}
            </TreeMain>
            <VScroll>
              <ScrollEnd><UpArrow /></ScrollEnd>
              <ScrollThumb $h={152} />
              <ScrollRest />
              <ScrollEnd><DownArrow /></ScrollEnd>
            </VScroll>
          </TreeArea>
        </LeftDock>

        <CanvasColumn>
          <ViewTabs>
            <ViewTab $w={159} $active>
              {I.tabPlan}0 - Mech<TabGrow /><TabClose><X /></TabClose>
            </ViewTab>
            <ViewTab $w={161}>{I.tabPlanDim}1 - Mech</ViewTab>
            <ViewTab $w={200}>{I.tabCeil}0 - Ceiling Mech</ViewTab>
          </ViewTabs>
          <Drawing>
            <Plan viewBox="433 201 1446 732" preserveAspectRatio="none">
              <g stroke="#000" strokeWidth="1" shapeRendering="crispEdges" fill="none">
                {gridX.map(x => (
                  <g key={x}>
                    <path d={`M${x} 267V275`} />
                    <path d={`M${x} 275V933`} strokeDasharray="28 8 7 6.3" />
                  </g>
                ))}
                {gridY.map(([n, y]) => (
                  <path key={n} d={`M451 ${y}H1565`} strokeDasharray="28 8 7 6.3" />
                ))}
              </g>
              <g stroke="#000" strokeWidth="1" fill="#fff">
                {gridX.map(x => <circle key={x} cx={x} cy={252} r={14.5} />)}
                {gridY.map(([n, y]) => (
                  <g key={n}>
                    <circle cx={436} cy={y} r={14.5} />
                    <circle cx={1580} cy={y} r={14.5} />
                  </g>
                ))}
              </g>
              {gridX.map((x, i) => <text key={x} x={x} y={252}>{i + 1}</text>)}
              {gridY.map(([n, y]) => (
                <g key={n}>
                  <text x={436} y={y}>{n}</text>
                  <text x={1580} y={y}>{n}</text>
                </g>
              ))}
              <circle cx="1517" cy="705" r="13" fill="#fff" stroke="#000" />
              <path d="M1497 705l10-9-3 9 3 9z" fill="#000" />
              <path d="M1492 705h3M1516 705h3" stroke="#aaa" />
            </Plan>
            <NavBar>
              <svg width="26" height="113" viewBox="0 0 26 113" style={{ display: 'block' }}>
                <circle cx="14" cy="30" r="9" fill="#eee" stroke="#999" strokeWidth="1.5" />
                <circle cx="14" cy="28" r="4" fill="none" stroke="#888" />
                <path d="M16 39h8" stroke="#2a7ab5" strokeWidth="2" />
                <path d="M12 48l3 3 3-3z" fill="#888" />
                <path d="M0 55h26" stroke="#c8c8c8" />
                <rect x="8" y="66" width="11" height="11" fill="#cfcbb2" stroke="#888" />
                <circle cx="19" cy="77" r="4" fill="none" stroke="#777" />
                <path d="M12 90l3 3 3-3z" fill="#888" />
              </svg>
            </NavBar>
          </Drawing>
          <ViewBar>
            <ScaleText>1 : 100</ScaleText>
            <BarIcons>
              {I.vb1}{I.vb2}{I.vb3}{I.vb4}{I.vb5}{I.vb6}{I.vb7}{I.vb8}{I.vb9}{I.vb10}{I.vb11}
            </BarIcons>
            <BarChevron>{I.leftChevron}</BarChevron>
            <HThumb />
          </ViewBar>
          <BarGap />
        </CanvasColumn>
      </Workspace>

      <StatusBar>
        <StatusText>Click to select, TAB for alternates, CTRL adds, SHIFT unselects.</StatusText>
        {I.worksets}
        <StatusCombo $w={254} $ml={8}><span /><Down /></StatusCombo>
        <StatusGroup $ml={9}>{I.design}<StatusCount>:0</StatusCount></StatusGroup>
        <StatusGroup $ml={25} $gap={11}>{I.list}{I.door}</StatusGroup>
        <StatusCombo $w={254} $ml={9}><span>Main Model</span><Down /></StatusCombo>
        <StatusGroup $ml={280} $gap={10}>
          {I.st1}{I.st2}{I.st3}{I.st4}{I.st5}{I.st6}{I.funnel}
          <StatusCount $ml={-8}>:0</StatusCount>
        </StatusGroup>
      </StatusBar>

      <Pointer viewBox="0 0 13 20"><path d="M1 1v15l4-3 2.5 6 3-1.5-2.5-5.5h5z" fill="#fff" stroke="#000" /></Pointer>
    </Page>
  );
}
